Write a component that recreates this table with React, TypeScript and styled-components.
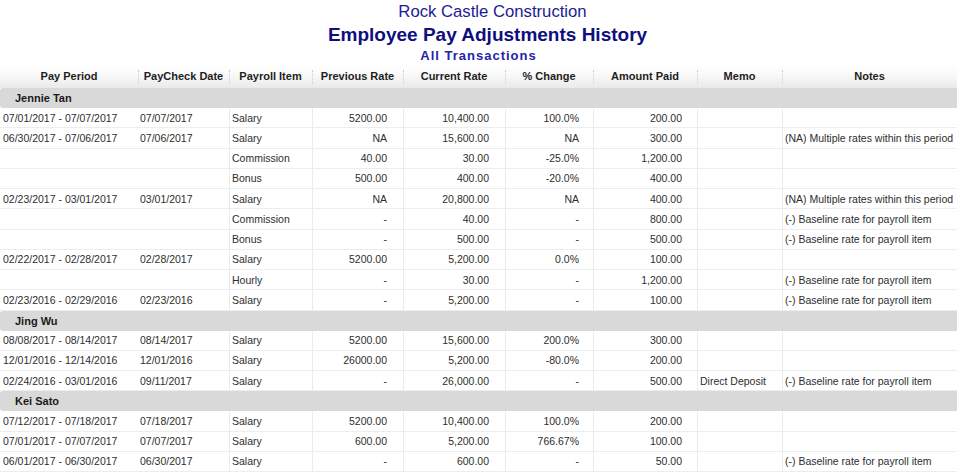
import React from "react";
import styled, { createGlobalStyle } from "styled-components";

const GlobalStyle = createGlobalStyle`
  html, body { margin: 0; padding: 0; background: #ffffff; }
  body { font-family: "Liberation Sans", Arial, sans-serif; }
`;

const COLS = "138px 91px 83px 91px 102px 88px 104px 85px 1fr";

type Align = "left" | "right";

interface ColDef {
  title: string;
  align: Align;
  pad: number;
}

const columns: ColDef[] = [
  { title: "Pay Period", align: "left", pad: 3 },
  { title: "PayCheck Date", align: "left", pad: 2 },
  { title: "Payroll Item", align: "left", pad: 2 },
  { title: "Previous Rate", align: "right", pad: 16 },
  { title: "Current Rate", align: "right", pad: 16 },
  { title: "% Change", align: "right", pad: 14 },
  { title: "Amount Paid", align: "right", pad: 15 },
  { title: "Memo", align: "left", pad: 2 },
  { title: "Notes", align: "left", pad: 2 },
];

type Row = string[];

interface Group {
  name: string;
  rows: Row[];
}

const NA_NOTE = "(NA) Multiple rates within this period";
const BASE = "(-) Baseline rate for payroll item";

const groups: Group[] = [
  {
    name: "Jennie Tan",
    rows: [
      ["07/01/2017 - 07/07/2017", "07/07/2017", "Salary", "5200.00", "10,400.00", "100.0%", "200.00", "", ""],
      ["06/30/2017 - 07/06/2017", "07/06/2017", "Salary", "NA", "15,600.00", "NA", "300.00", "", NA_NOTE],
      ["", "", "Commission", "40.00", "30.00", "-25.0%", "1,200.00", "", ""],
      ["", "", "Bonus", "500.00", "400.00", "-20.0%", "400.00", "", ""],
      ["02/23/2017 - 03/01/2017", "03/01/2017", "Salary", "NA", "20,800.00", "NA", "400.00", "", NA_NOTE],
      ["", "", "Commission", "-", "40.00", "-", "800.00", "", BASE],
      ["", "", "Bonus", "-", "500.00", "-", "500.00", "", BASE],
      ["02/22/2017 - 02/28/2017", "02/28/2017", "Salary", "5200.00", "5,200.00", "0.0%", "100.00", "", ""],
      ["", "", "Hourly", "-", "30.00", "-", "1,200.00", "", BASE],
      ["02/23/2016 - 02/29/2016", "02/23/2016", "Salary", "-", "5,200.00", "-", "100.00", "", BASE],
    ],
  },
  {
    name: "Jing Wu",
    rows: [
      ["08/08/2017 - 08/14/2017", "08/14/2017", "Salary", "5200.00", "15,600.00", "200.0%", "300.00", "", ""],
      ["12/01/2016 - 12/14/2016", "12/01/2016", "Salary", "26000.00", "5,200.00", "-80.0%", "200.00", "", ""],
      ["02/24/2016 - 03/01/2016", "09/11/2017", "Salary", "-", "26,000.00", "-", "500.00", "Direct Deposit", BASE],
    ],
  },
  {
    name: "Kei Sato",
    rows: [
      ["07/12/2017 - 07/18/2017", "07/18/2017", "Salary", "5200.00", "10,400.00", "100.0%", "200.00", "", ""],
      ["07/01/2017 - 07/07/2017", "07/07/2017", "Salary", "600.00", "5,200.00", "766.67%", "100.00", "", ""],
      ["06/01/2017 - 06/30/2017", "06/30/2017", "Salary", "-", "600.00", "-", "50.00", "", BASE],
    ],
  },
];

const Page = styled.div`
  width: 957px;
  height: 473px;
  overflow: hidden;
  background: #ffffff;
`;

const ReportHeader = styled.header`
  display: flex;
  flex-direction: column;
  align-items: center;
  padding-top: 2px;
  height: 64px;
  box-sizing: border-box;
`;

const Company = styled.div`
  font-size: 16.7px;
  line-height: 19px;
  color: #1c1c94;
  margin-left: 28px;
`;

const Title = styled.h1`
  margin: 2px 0 0 18px;
  font-size: 19px;
  line-height: 23px;
  font-weight: bold;
  color: #0e0e7e;
`;

const Subtitle = styled.div`
  font-size: 13px;
  line-height: 16px;
  font-weight: bold;
  letter-spacing: 1px;
  color: #2424a6;
  margin-top: 2px;
`;

const Grid = styled.div`
  display: grid;
  grid-template-columns: ${COLS};
`;

const HeaderRow = styled(Grid)`
  height: 24px;
  background: linear-gradient(#ffffff 0%, #fafafa 40%, #eaeaea 100%);
`;

const HeaderCell = styled.div<{ $first?: boolean }>`
  position: relative;
  display: flex;
  align-items: center;
  justify-content: center;
  font-size: 11px;
  font-weight: bold;
  color: #1e1e1e;
  white-space: nowrap;
  &::before {
    content: "";
    display: ${(p) => (p.$first ? "none" : "block")};
    position: absolute;
    left: 0;
    top: 6px;
    bottom: 4px;
    border-left: 1px dotted #cacaca;
  }
`;

const GroupRow = styled.div`
  height: 20px;
  display: flex;
  align-items: center;
  padding-left: 15px;
  background: #d9d9d9;
  border-radius: 3px 0 0 3px;
  font-size: 11px;
  font-weight: bold;
  color: #1a1a1a;
`;

const DataRow = styled(Grid)`
  height: 20.25px;
  box-sizing: border-box;
  border-bottom: 1px solid #ededed;
`;

const Cell = styled.div<{ $align: Align; $pad: number; $line: boolean }>`
  display: flex;
  align-items: center;
  justify-content: ${(p) => (p.$align === "right" ? "flex-end" : "flex-start")};
  padding: ${(p) => (p.$align === "right" ? `0 ${p.$pad}px 0 0` : `0 0 0 ${p.$pad}px`)};
  border-left: ${(p) => (p.$line ? "1px solid #ebebeb" : "none")};
  font-size: 10.5px;
  color: #2e2e2e;
  white-space: nowrap;
  overflow: hidden;
`;

export default function App() {
  return (
    <Page>
      <GlobalStyle />
      <ReportHeader>
        <Company>Rock Castle Construction</Company>
        <Title>Employee Pay Adjustments History</Title>
        <Subtitle>All Transactions</Subtitle>
      </ReportHeader>
      <HeaderRow>
        {columns.map((c, i) => (
          <HeaderCell key={c.title} $first={i === 0}>
            {c.title}
          </HeaderCell>
        ))}
      </HeaderRow>
      {groups.map((g) => (
        <section key={g.name}>
          <GroupRow>{g.name}</GroupRow>
          {g.rows.map((r, ri) => (
            <DataRow key={ri}>
              {r.map((v, ci) => (
                <Cell
                  key={ci}
                  $align={columns[ci].align}
                  $pad={columns[ci].pad}
                  $line={ci >= 2}
                >
                  {v}
                </Cell>
              ))}
            </DataRow>
          ))}
        </section>
      ))}
    </Page>
  );
}
